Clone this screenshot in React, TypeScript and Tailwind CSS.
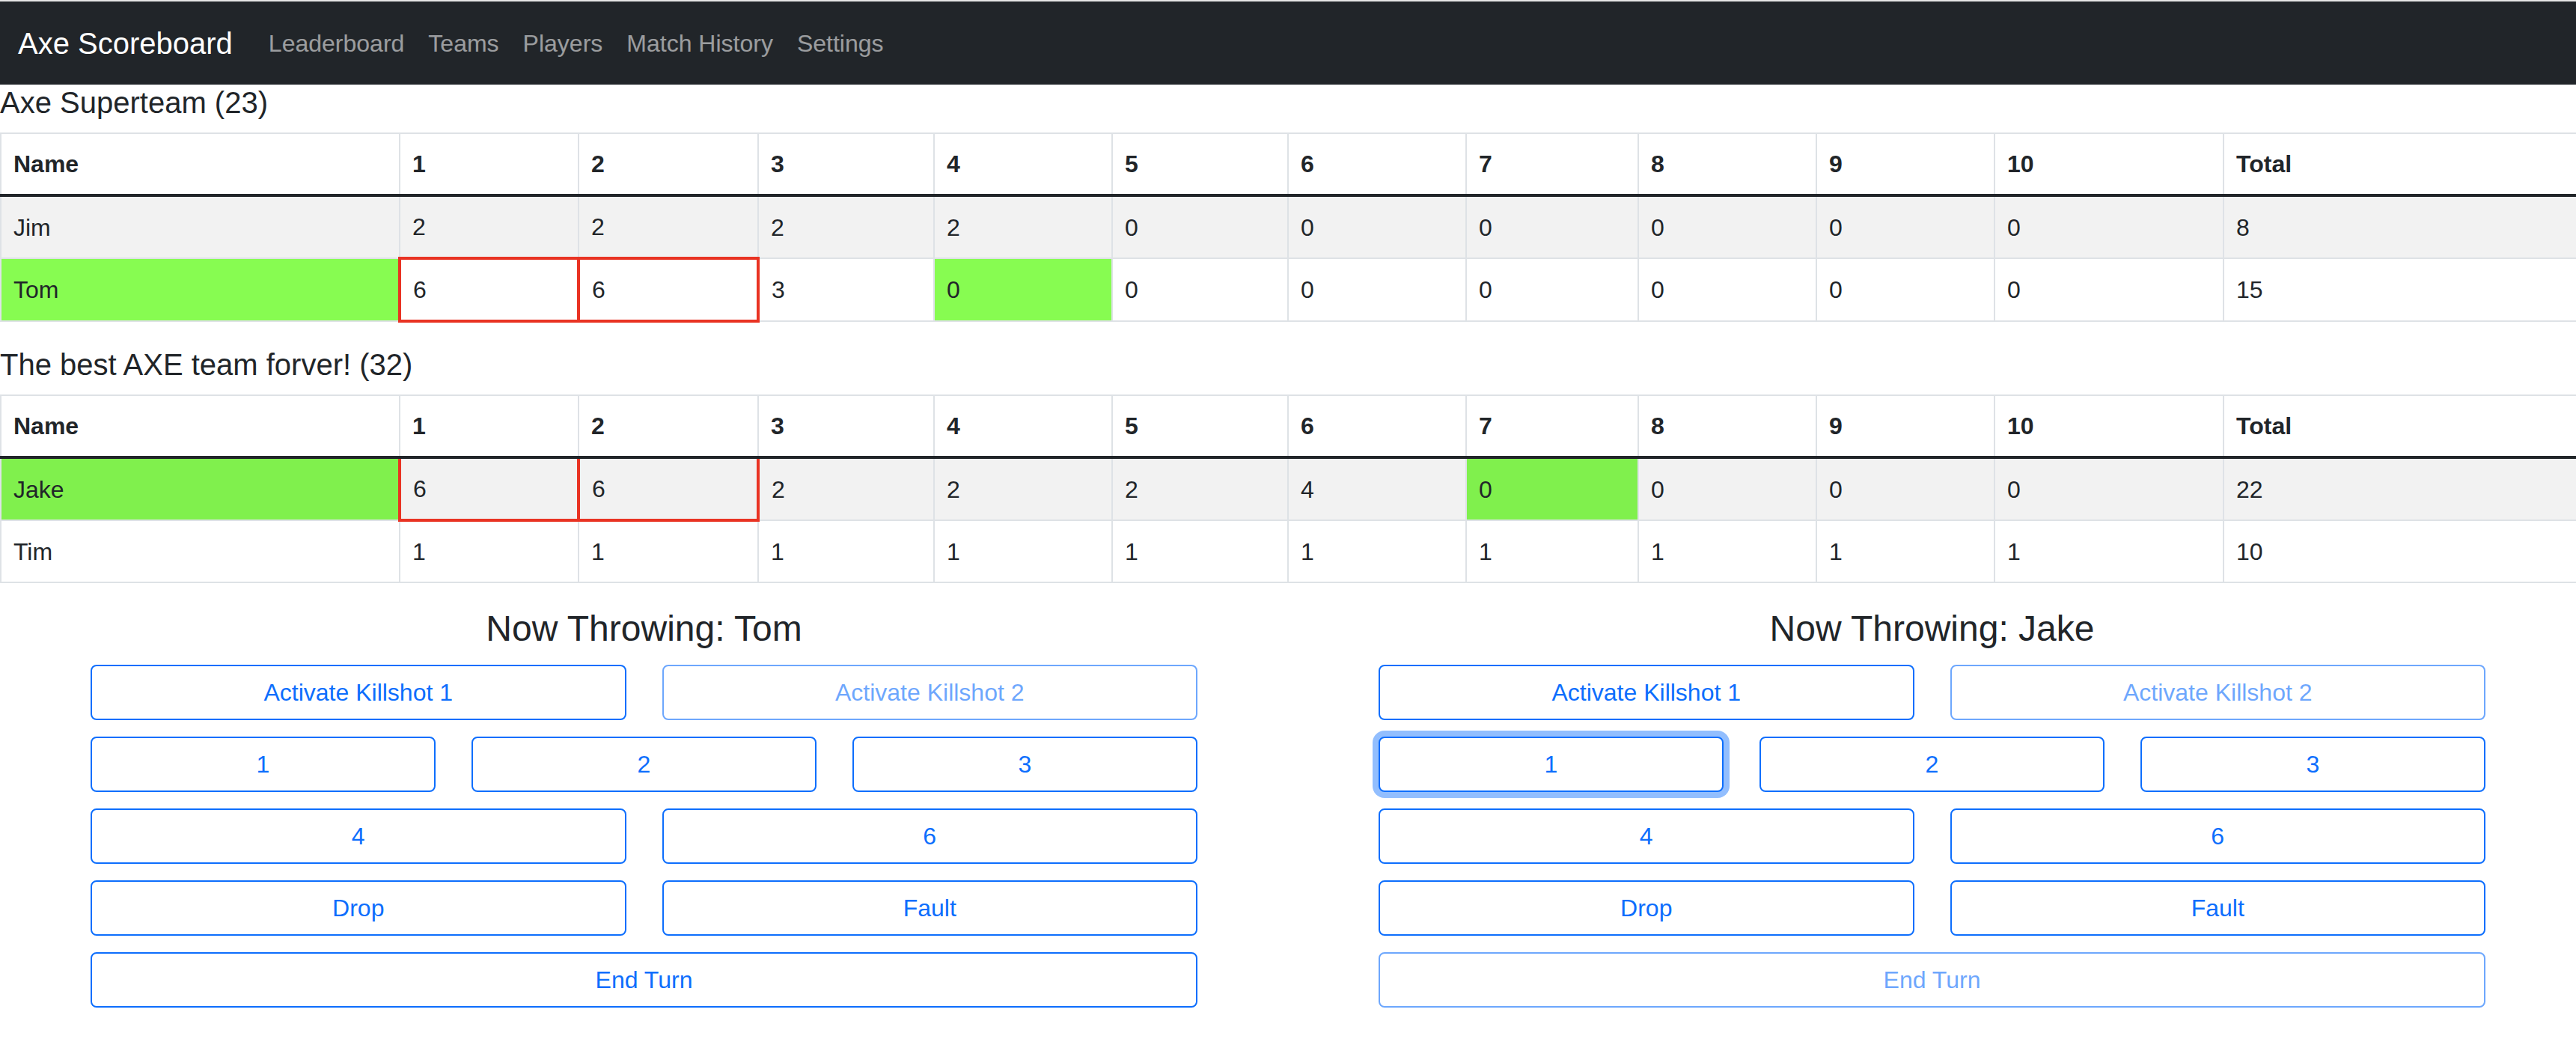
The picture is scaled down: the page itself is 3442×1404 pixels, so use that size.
import React from 'react';

type Row = {
  name: string;
  scores: number[];
  total: number;
  nameGreen?: boolean;
  greenCol?: number;
  redCols?: number[];
};

type Team = { title: string; rows: Row[] };

const teams: Team[] = [
  {
    title: 'Axe Superteam (23)',
    rows: [
      { name: 'Jim', scores: [2, 2, 2, 2, 0, 0, 0, 0, 0, 0], total: 8 },
      { name: 'Tom', scores: [6, 6, 3, 0, 0, 0, 0, 0, 0, 0], total: 15, nameGreen: true, greenCol: 3, redCols: [0, 1] },
    ],
  },
  {
    title: 'The best AXE team forver! (32)',
    rows: [
      { name: 'Jake', scores: [6, 6, 2, 2, 2, 4, 0, 0, 0, 0], total: 22, nameGreen: true, greenCol: 6, redCols: [0, 1] },
      { name: 'Tim', scores: [1, 1, 1, 1, 1, 1, 1, 1, 1, 1], total: 10 },
    ],
  },
];

const colWidths = [533, 239, 240, 235, 238, 235, 238, 230, 238, 238, 306, 472];
const navLinks = ['Leaderboard', 'Teams', 'Players', 'Match History', 'Settings'];

function ScoreTable({ team }: { team: Team }) {
  return (
    <div>
      <h5 className="text-[40px] leading-[48px] font-medium text-[#212529] mb-[16px]">{team.title}</h5>
      <table className="w-full table-fixed border-collapse text-[32px] leading-[48px] text-[#212529] mb-[32px]">
        <colgroup>
          {colWidths.map((w, i) => (
            <col key={i} style={{ width: w }} />
          ))}
        </colgroup>
        <thead>
          <tr>
            {['Name', '1', '2', '3', '4', '5', '6', '7', '8', '9', '10', 'Total'].map(h => (
              <th key={h} className="text-left font-bold px-[16px] py-[16px] border-2 border-[#dee2e6] border-b-4 border-b-[#212529]">
                {h}
              </th>
            ))}
          </tr>
        </thead>
        <tbody>
          {team.rows.map((row, ri) => {
            const striped = ri === 0;
            const base = striped ? 'bg-[#f2f2f2]' : 'bg-white';
            const green = striped ? 'bg-[#80f04d]' : 'bg-[#87fc51]';
            return (
              <tr key={row.name}>
                <td className={`px-[16px] py-[16px] border-2 border-[#dee2e6] ${row.nameGreen ? green : base}`}>{row.name}</td>
                {row.scores.map((s, ci) => {
                  const red = row.redCols?.includes(ci);
                  const bg = row.greenCol === ci ? green : base;
                  return (
                    <td
                      key={ci}
                      className={`px-[16px] py-[16px] ${red ? 'border-4 border-[#e93323]' : 'border-2 border-[#dee2e6]'} ${bg}`}
                    >
                      {s}
                    </td>
                  );
                })}
                <td className={`px-[16px] py-[16px] border-2 border-[#dee2e6] ${base}`}>{row.total}</td>
              </tr>
            );
          })}
        </tbody>
      </table>
    </div>
  );
}

function Btn({ label, disabled, focused }: { label: string; disabled?: boolean; focused?: boolean }) {
  return (
    <button
      disabled={disabled}
      className={`h-[74px] w-full rounded-[8px] border-2 border-[#0d6efd] text-[#0d6efd] text-[32px] leading-[48px] bg-white ${
        disabled ? 'opacity-60' : ''
      } ${focused ? 'shadow-[0_0_0_8px_rgba(13,110,253,0.45)]' : ''}`}
    >
      {label}
    </button>
  );
}

function ThrowPanel({ player, endDisabled, focusOne }: { player: string; endDisabled?: boolean; focusOne?: boolean }) {
  return (
    <div className="px-[121px]">
      <h4 className="text-center text-[48px] leading-[58px] font-medium text-[#212529] mb-[19px]">Now Throwing: {player}</h4>
      <div className="flex flex-col gap-[22px]">
        <div className="grid grid-cols-2 gap-x-[48px]">
          <Btn label="Activate Killshot 1" />
          <Btn label="Activate Killshot 2" disabled />
        </div>
        <div className="grid grid-cols-3 gap-x-[48px]">
          <Btn label="1" focused={focusOne} />
          <Btn label="2" />
          <Btn label="3" />
        </div>
        <div className="grid grid-cols-2 gap-x-[48px]">
          <Btn label="4" />
          <Btn label="6" />
        </div>
        <div className="grid grid-cols-2 gap-x-[48px]">
          <Btn label="Drop" />
          <Btn label="Fault" />
        </div>
        <Btn label="End Turn" disabled={endDisabled} />
      </div>
    </div>
  );
}

export default function App() {
  return (
    <div className="min-h-[1404px] bg-white font-['Liberation_Sans',Arial,sans-serif]">
      <div className="h-[2px] bg-[#e6e6e6]" />
      <nav className="h-[111px] bg-[#212529] flex items-center px-[24px]">
        <span className="text-white text-[40px] leading-[60px] mr-[32px]">Axe Scoreboard</span>
        {navLinks.map(l => (
          <span key={l} className="text-white/55 text-[32px] leading-[48px] px-[16px]">
            {l}
          </span>
        ))}
      </nav>
      {teams.map(t => (
        <ScoreTable key={t.title} team={t} />
      ))}
      <div className="grid grid-cols-2">
        <ThrowPanel player="Tom" />
        <ThrowPanel player="Jake" endDisabled focusOne />
      </div>
    </div>
  );
}
